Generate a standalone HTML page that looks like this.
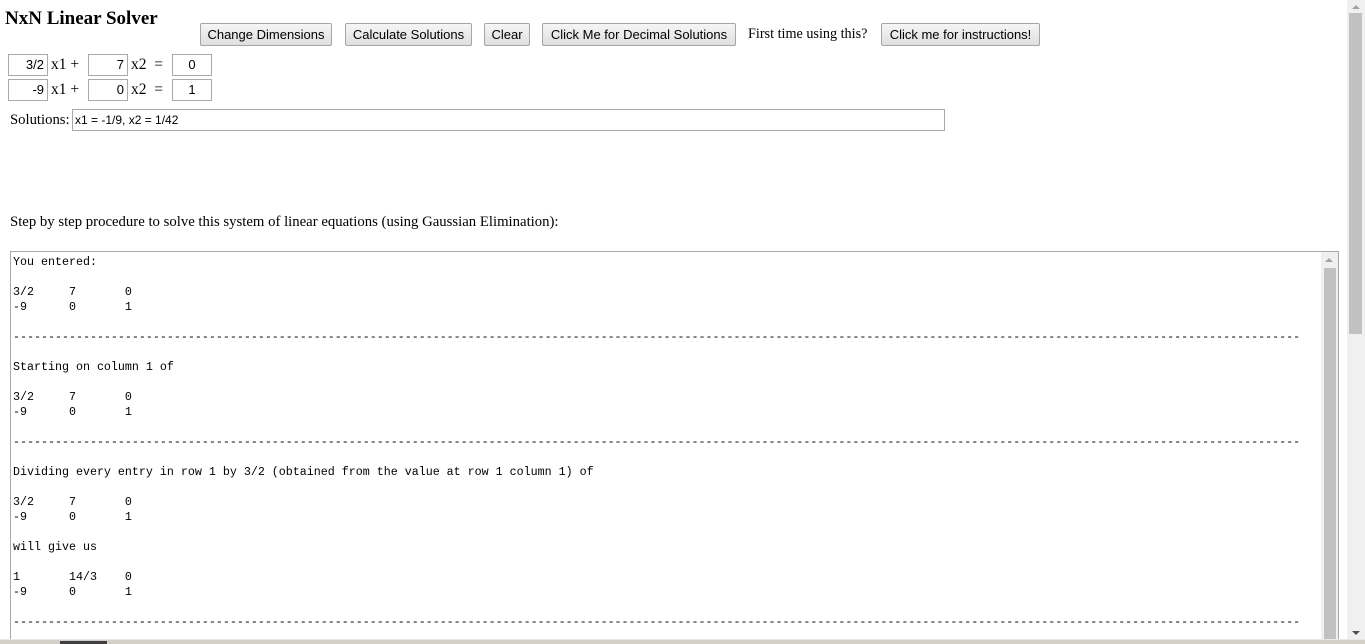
<!DOCTYPE html>
<html><head><meta charset="utf-8"><style>
html,body{margin:0;padding:0;width:1365px;height:644px;overflow:hidden;background:#fff;position:relative;font-family:"Liberation Serif",serif;color:#000}
.a{position:absolute;white-space:nowrap}
.btn{position:absolute;top:23px;border:1px solid #a6a6a6;background:linear-gradient(#f6f6f6,#dedede);font-family:"Liberation Sans",sans-serif;font-size:13px;line-height:21px;text-align:center;box-sizing:border-box;height:23px;border-radius:2px}
.in{position:absolute;height:22px;border:1px solid #a9a9a9;box-sizing:border-box;font-family:"Liberation Sans",sans-serif;font-size:13px;line-height:20px;background:#fff}
.r{text-align:right;padding-right:3px}
.c{text-align:center}
.t{font-size:15.5px}
pre{margin:0;font-family:"Liberation Mono",monospace;font-size:11.67px;line-height:15px;position:absolute;left:2px;top:3px}
</style></head><body>
<div class="a" style="left:5px;top:8px;font-weight:bold;font-size:19px">NxN Linear Solver</div>
<div class="btn" style="left:200px;width:132px">Change Dimensions</div>
<div class="btn" style="left:345px;width:127px">Calculate Solutions</div>
<div class="btn" style="left:484px;width:46px">Clear</div>
<div class="btn" style="left:542px;width:194px">Click Me for Decimal Solutions</div>
<div class="a" style="left:748px;top:26px;font-size:14.2px">First time using this?</div>
<div class="btn" style="left:881px;width:159px">Click me for instructions!</div>

<div class="in r" style="left:8px;top:54px;width:40px">3/2</div>
<div class="a t" style="left:51px;top:56px">x1 +</div>
<div class="in r" style="left:88px;top:54px;width:40px">7</div>
<div class="a t" style="left:131px;top:56px">x2 &nbsp;=</div>
<div class="in c" style="left:172px;top:54px;width:40px">0</div>

<div class="in r" style="left:8px;top:79px;width:40px">-9</div>
<div class="a t" style="left:51px;top:81px">x1 +</div>
<div class="in r" style="left:88px;top:79px;width:40px">0</div>
<div class="a t" style="left:131px;top:81px">x2 &nbsp;=</div>
<div class="in c" style="left:172px;top:79px;width:40px">1</div>

<div class="a" style="left:10px;top:112px;font-size:14.7px">Solutions:</div>
<div class="in" style="left:72px;top:109px;width:873px;padding-left:2px;font-size:12px">x1 = -1/9, x2 = 1/42</div>

<div class="a" style="left:10px;top:214px;font-size:14.75px">Step by step procedure to solve this system of linear equations (using Gaussian Elimination):</div>

<div class="a" style="left:10px;top:251px;width:1329px;height:400px;border:1px solid #a9a9a9;box-sizing:border-box;overflow:hidden">
<pre>You entered:

3/2	7	0
-9	0	1

----------------------------------------------------------------------------------------------------------------------------------------------------------------------------------------

Starting on column 1 of

3/2	7	0
-9	0	1

----------------------------------------------------------------------------------------------------------------------------------------------------------------------------------------

Dividing every entry in row 1 by 3/2 (obtained from the value at row 1 column 1) of

3/2	7	0
-9	0	1

will give us

1	14/3	0
-9	0	1

----------------------------------------------------------------------------------------------------------------------------------------------------------------------------------------
</pre>
<div style="position:absolute;right:0;top:0;width:17px;height:100%;background:#f0f0f0"></div>
<div style="position:absolute;right:2px;top:16px;width:12px;height:400px;background:#c1c1c1"></div>
<div style="position:absolute;right:5px;top:6px;width:0;height:0;border-left:4px solid transparent;border-right:4px solid transparent;border-bottom:4px solid #a3a3a3"></div>
</div>

<div style="position:absolute;left:1347px;top:0;width:18px;height:644px;background:#f0f0f0"></div>
<div style="position:absolute;left:1349px;top:13px;width:13px;height:321px;background:#c1c1c1"></div>
<div style="position:absolute;left:1352px;top:5px;width:0;height:0;border-left:4px solid transparent;border-right:4px solid transparent;border-bottom:4px solid #a3a3a3"></div>
<div style="position:absolute;left:1352px;top:631px;width:0;height:0;border-left:4px solid transparent;border-right:4px solid transparent;border-top:4px solid #505050"></div>
<div style="position:absolute;left:0;top:639px;width:1365px;height:5px;background:#d4d0c8;border-top:1px solid #e8e8e8"></div>
<div style="position:absolute;left:60px;top:641px;width:47px;height:3px;background:#404040"></div>
</body></html>
